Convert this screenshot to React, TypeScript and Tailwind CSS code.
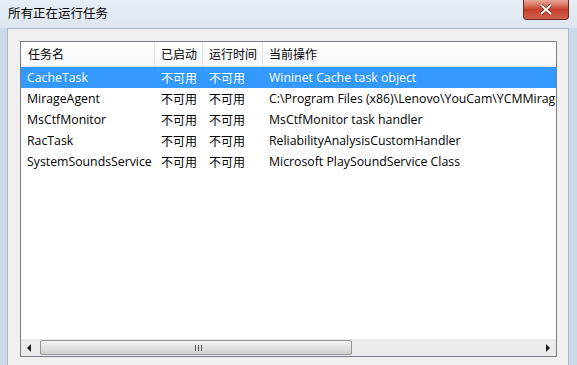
import React from 'react';

const rows = [
  { name: 'CacheTask', op: 'Wininet Cache task object' },
  { name: 'MirageAgent', op: 'C:\\Program Files (x86)\\Lenovo\\YouCam\\YCMMirage.exe' },
  { name: 'MsCtfMonitor', op: 'MsCtfMonitor task handler' },
  { name: 'RacTask', op: 'ReliabilityAnalysisCustomHandler' },
  { name: 'SystemSoundsService', op: 'Microsoft PlaySoundService Class' },
];

const font = { fontFamily: '"Open Sans", "Noto Sans CJK SC", sans-serif' };

const App = () => {
  return (
    <div className="w-[577px] h-[365px] overflow-hidden bg-[#c9d9ea] flex flex-col" style={font}>
      {/* 标题栏 */}
      <div className="h-[28px] shrink-0 flex items-start justify-between bg-gradient-to-b from-[#e6edf4] to-[#dde6ef] pl-[8px] pr-[8px]">
        <div className="mt-[8px] text-[12.5px] text-black leading-none">所有正在运行任务</div>
        <div className="w-[46px] h-[20px] rounded-b-[4px] border border-t-0 border-[#6d2a22] bg-gradient-to-b from-[#e9a99a] via-[#c7402c] to-[#d2614c] flex items-center justify-center">
          <svg width="14" height="11" viewBox="0 0 14 11">
            <path d="M2 1 L12 10 M12 1 L2 10" stroke="#5a2018" strokeWidth="3.2" />
            <path d="M2 1 L12 10 M12 1 L2 10" stroke="#ffffff" strokeWidth="2" />
          </svg>
        </div>
      </div>

      {/* 客户区 */}
      <div className="flex-1 ml-[7px] mr-[8px] bg-[#f0f0f0] border-t border-l border-r border-[#a9b8c9] pt-[12px] pl-[12px] pr-[11px] flex flex-col">
        <div className="h-[316px] shrink-0 border border-[#7a7f87] bg-white flex flex-col">
          {/* 表头 */}
          <div className="h-[25px] shrink-0 flex items-stretch bg-gradient-to-b from-white to-[#f6f7f9] border-b border-[#e3e6ea] text-[12px] text-black">
            <div className="w-[134px] pl-[7px] pt-[1px] flex items-center border-r border-[#e2e4e7]">任务名</div>
            <div className="w-[48px] pl-[6px] pt-[1px] flex items-center border-r border-[#e2e4e7]">已启动</div>
            <div className="w-[60px] pl-[6px] pt-[1px] flex items-center border-r border-[#e2e4e7]">运行时间</div>
            <div className="flex-1 pl-[6px] pt-[1px] flex items-center">当前操作</div>
          </div>

          {/* 行 */}
          <div className="flex-1 flex flex-col text-[12.3px]">
            {rows.map((r, i) => (
              <div
                key={r.name}
                className={`h-[21px] pt-[2px] flex items-center whitespace-nowrap overflow-hidden ${i === 0 ? 'bg-[#3399ff] text-white' : 'text-black'}`}
              >
                <div className="w-[134px] pl-[6px] shrink-0">{r.name}</div>
                <div className="w-[48px] pl-[6px] shrink-0 text-[12px]">不可用</div>
                <div className="w-[60px] pl-[6px] shrink-0 text-[12px]">不可用</div>
                <div className="pl-[6px] shrink-0">{r.op}</div>
              </div>
            ))}
          </div>

          {/* 水平滚动条 */}
          <div className="h-[17px] shrink-0 bg-[#ebebeb] flex items-stretch">
            <div className="w-[17px] flex items-center justify-center">
              <svg width="5" height="8" viewBox="0 0 5 8"><path d="M4 0 L0 4 L4 8 Z" fill="#1e1e1e" /></svg>
            </div>
            <div className="w-[312px] my-[1px] ml-[2px] rounded-[2px] border border-[#979797] bg-gradient-to-b from-[#f3f3f3] via-[#e1e1e1] to-[#d1d1d1] flex items-center justify-center">
              <div className="flex gap-[2px] ml-[4px]">
                <div className="w-[1px] h-[6px] bg-[#555]" />
                <div className="w-[1px] h-[6px] bg-[#555]" />
                <div className="w-[1px] h-[6px] bg-[#555]" />
              </div>
            </div>
            <div className="flex-1" />
            <div className="w-[17px] flex items-center justify-center">
              <svg width="5" height="8" viewBox="0 0 5 8"><path d="M1 0 L5 4 L1 8 Z" fill="#1e1e1e" /></svg>
            </div>
          </div>
        </div>
      </div>
    </div>
  );
};

export default App;
